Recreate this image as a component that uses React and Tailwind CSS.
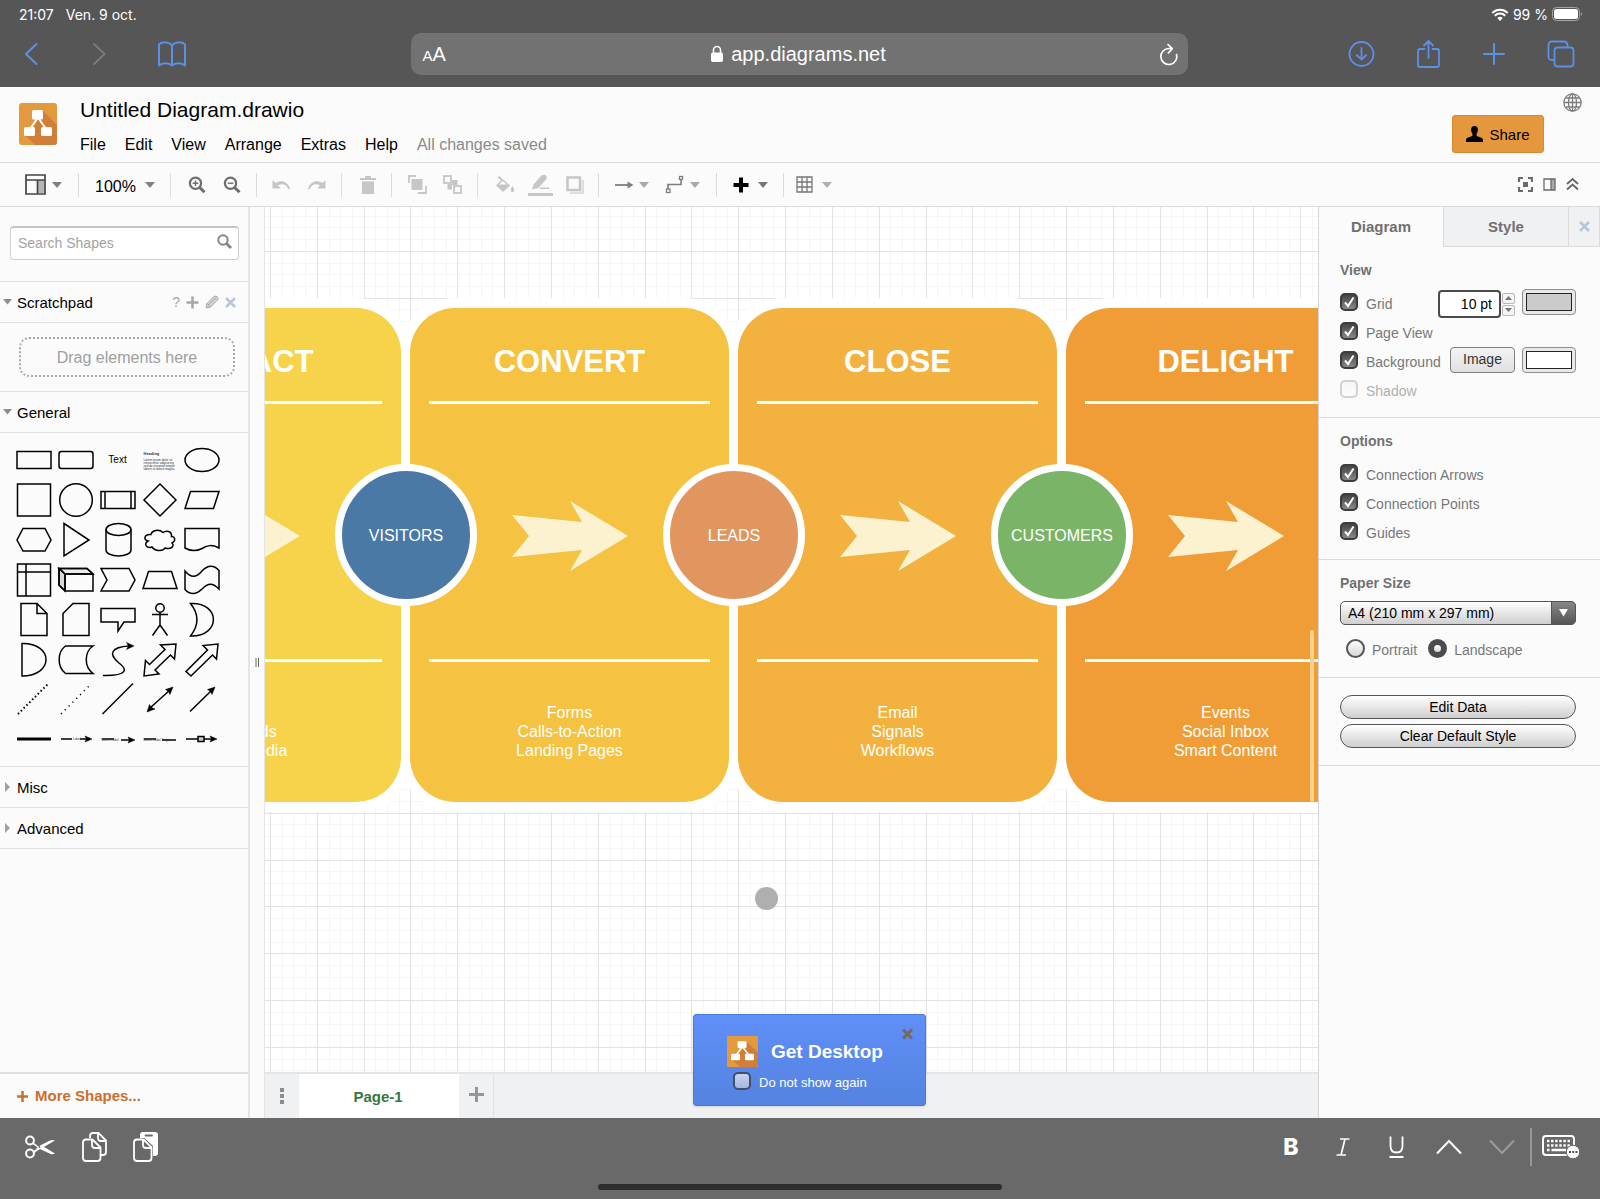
import React from "react";

function Svg({ w, h, children, className = "", ...rest }) {
  return (
    <svg
      width={w}
      height={h}
      viewBox={`0 0 ${w} ${h}`}
      fill="none"
      stroke="currentColor"
      className={`shrink-0 ${className}`}
      aria-hidden="true"
      {...rest}
    >
      {children}
    </svg>
  );
}

function Logo({ w, h, r }) {
  return (
    <svg width={w} height={h} viewBox="0 0 38 42" preserveAspectRatio="none" className="shrink-0" aria-hidden="true">
      <rect width="38" height="42" rx={r} fill="#e39a3f" />
      <path d="M24 8 L38 22 V39 Q38 42 35 42 H16 L6 32 L15 24 L19 17 Z" fill="#d17f38" />
      <path d="M18 16 L11 26 M20 16 L27 26" stroke="#fff" strokeWidth="2" />
      <rect x="13" y="7" width="11" height="9.500" rx="1.500" fill="#fff" />
      <rect x="5" y="24" width="11" height="9" rx="1.500" fill="#fff" />
      <rect x="22" y="24" width="11" height="9" rx="1.500" fill="#fff" />
    </svg>
  );
}

function Browser() {
  return (
    <header className="bg-[#565656] text-white h-[87px] flex flex-col shrink-0 font-['Inter',sans-serif]">
      <div className="h-7 flex items-center justify-between pl-[19px] pr-[17px] text-[14px]">
        <div className="flex gap-3">
          <span>21:07</span>
          <span>Ven. 9 oct.</span>
        </div>
        <div className="flex items-center gap-1">
          <Svg w={18} h={13} stroke="none" fill="#fff">
            <path d="M9 13 L6.2 10.1 A4 4 0 0 1 11.8 10.1 Z" />
            <g fill="none" stroke="#fff" strokeWidth="2">
              <path d="M3.8 7.7 A7.4 7.4 0 0 1 14.2 7.7" />
              <path d="M1.3 5 A11 11 0 0 1 16.7 5" />
            </g>
          </Svg>
          <span>99 %</span>
          <Svg w={31} h={14} stroke="none">
            <rect x="0.5" y="0.5" width="27" height="13" rx="4" stroke="#a5a5a5" />
            <rect x="2" y="2" width="24" height="10" rx="2.5" fill="#fff" />
            <path d="M29 5 Q31 7 29 9 Z" fill="#a5a5a5" />
          </Svg>
        </div>
      </div>
      <div className="flex items-center h-[52px] text-[#5c8fe6]">
        <div className="flex-1 flex items-center pl-[23px]">
          <button aria-label="Back"><Svg w={16} h={24} strokeWidth="2"><path d="M13.5 2 L3 12 L13.5 22" strokeLinecap="round" strokeLinejoin="round" /></Svg></button>
          <button aria-label="Forward" className="ml-[52px] text-[#7a7a7a]"><Svg w={16} h={24} strokeWidth="2"><path d="M3 2 L13.5 12 L3 22" strokeLinecap="round" strokeLinejoin="round" /></Svg></button>
          <button aria-label="Bookmarks" className="ml-[50px]">
            <Svg w={30} h={26} strokeWidth="2">
              <path d="M15 4.5 C12 0.5 4.5 0.5 2 3.5 V24.5 C5 21.5 12 21.5 15 24.5 C18 21.5 25 21.5 28 24.5 V3.5 C25.500 0.5 18 0.5 15 4.500 V24.500" strokeLinejoin="round" />
            </Svg>
          </button>
        </div>
        <div className="w-[777px] h-[42px] rounded-[10px] bg-[#727272] text-white flex items-center pl-3 pr-[9px] font-['Liberation_Sans',Arial,sans-serif]">
          <button aria-label="Text size" className="flex items-baseline w-10">
            <span className="text-[15px]">A</span>
            <span className="text-[20px]">A</span>
          </button>
          <div className="flex-1 flex items-center justify-center gap-[8px] text-[20px] pr-4">
            <Svg w={12} h={18} stroke="none">
              <path d="M2.500 8 V5 a3.500 3.500 0 0 1 7 0 V8" stroke="#fff" strokeWidth="1.600" />
              <rect y="7.500" width="12" height="9.500" rx="1.800" fill="#fff" />
            </Svg>
            <span>app.diagrams.net</span>
          </div>
          <button aria-label="Reload" className="w-7 flex justify-end pt-px">
            <Svg w={20} h={24} strokeWidth="1.700">
              <path d="M17.600 11.500 A8 8 0 1 1 10 5.500 L13 5.700 M9 1.500 L13.300 5.700 L9.300 10" strokeLinecap="round" strokeLinejoin="round" />
            </Svg>
          </button>
        </div>
        <div className="flex-1 flex items-center justify-end gap-[41px] pr-[25px]">
          <button aria-label="Downloads">
            <Svg w={27} h={28} strokeWidth="1.800"><circle cx="13.500" cy="14" r="12" /><path d="M13.500 8 V19.500 M8.700 15 L13.500 19.700 L18.300 15" strokeLinecap="round" strokeLinejoin="round" /></Svg>
          </button>
          <button aria-label="Share page">
            <Svg w={25} h={30} strokeWidth="1.800"><path d="M8.500 10 H4 Q2 10 2 12 V26 Q2 28 4 28 H21 Q23 28 23 26 V12 Q23 10 21 10 H16.500 M12.500 19 V2 M8 6.500 L12.500 2 L17 6.500" strokeLinecap="round" strokeLinejoin="round" /></Svg>
          </button>
          <button aria-label="New tab" className="px-px">
            <Svg w={22} h={22} strokeWidth="2"><path d="M11 1 V21 M1 11 H21" strokeLinecap="round" /></Svg>
          </button>
          <button aria-label="Tabs">
            <Svg w={28} h={28} strokeWidth="1.800"><path d="M7 20 H5 Q1.500 20 1.500 16.500 V5 Q1.500 1.500 5 1.500 H17 Q20 1.500 20.500 5 V7" /><rect x="7.500" y="7.500" width="19" height="19" rx="3" /></Svg>
          </button>
        </div>
      </div>
    </header>
  );
}

function AppHeader() {
  return (
    <div className="h-[76px] shrink-0 flex bg-[#fbfbfb] border-b border-[#d8dade] pl-[19px]">
      <div className="pt-4"><Logo w={38} h={42} r={3} /></div>
      <div className="pl-[23px] pt-[9px] flex-1">
        <h1 className="text-[21px] leading-7">Untitled Diagram.drawio</h1>
        <nav className="flex gap-[19px] mt-[11px] text-base leading-5">
          {["File", "Edit", "View", "Arrange", "Extras", "Help"].map((m) => (
            <button key={m}>{m}</button>
          ))}
          <span className="text-[#8a8a8a]">All changes saved</span>
        </nav>
      </div>
      <button className="mt-7 h-[38px] w-[92px] rounded-[3px] bg-[#e5973e] border border-[#d98a30] flex items-center justify-center gap-[6px] text-[15px]">
        <Svg w={17} h={18} stroke="none" fill="#000">
          <path fill="#000" d="M8.500 1 C11.200 1 12 3 11.900 5 C11.800 7 11 8.200 10.500 9 V10.500 C11.500 12 16.500 12 17 14.500 V17 H0 V14.500 C0.500 12 5.500 12 6.500 10.500 V9 C6 8.200 5.200 7 5.100 5 C5 3 5.800 1 8.500 1 Z" />
        </Svg>
        <span className="pt-[3px]">Share</span>
      </button>
      <button aria-label="Language" className="self-start mt-[6px] ml-[19px] mr-[18px] text-[#7d7d7d]">
        <Svg w={19} h={19} strokeWidth="1.300">
          <circle cx="9.500" cy="9.500" r="8.700" /><ellipse cx="9.500" cy="9.500" rx="4" ry="8.700" />
          <path d="M9.500 1 V18 M1 9.500 H18 M2.500 5 H16.500 M2.500 14 H16.500" />
        </Svg>
      </button>
    </div>
  );
}

function Caret({ className = "text-[#808080]" }) {
  return <Svg w={10} h={6} stroke="none" className={className}><path d="M0 0 H10 L5 6 Z" fill="currentColor" /></Svg>;
}

function Magnifier({ sign }) {
  return (
    <Svg w={18} h={18} className="text-[#6e6e6e]">
      <circle cx="7.500" cy="7.200" r="5.600" strokeWidth="2.200" />
      <path d="M11.700 11.500 L16.500 16.300" strokeWidth="3" />
      <path d={sign === "+" ? "M4.700 7.200 H10.300 M7.500 4.400 V10" : "M4.700 7.200 H10.300"} strokeWidth="1.400" />
    </Svg>
  );
}

const groupClass = "h-6 flex items-center justify-center border-r border-[#dcdcdc]";

function Toolbar() {
  return (
    <div className="h-11 shrink-0 bg-[#fbfbfb] border-b border-[#d8dade] flex items-center text-[#c6c6c6]">
      <div className={`${groupClass} w-[79px] pl-2`}>
        <button aria-label="View" className="flex items-center gap-[6px]">
          <Svg w={21} h={21} className="text-[#444]">
            <rect x="13" y="6" width="6" height="13" fill="#b5b5b5" stroke="none" />
            <path d="M1 1 H20 V20 H1 Z M1 6 H20 M12.500 6 V20" strokeWidth="1.700" />
          </Svg>
          <Caret />
        </button>
      </div>
      <div className={`${groupClass} w-[92px] pl-px`}>
        <button className="flex items-center gap-[9px] text-base text-black"><span className="pt-1">100%</span><Caret /></button>
      </div>
      <div className={`${groupClass} w-[86px] pl-[2px] gap-[17px]`}>
        <button aria-label="Zoom in"><Magnifier sign="+" /></button>
        <button aria-label="Zoom out"><Magnifier sign="-" /></button>
      </div>
      <div className={`${groupClass} w-[85px] gap-4`}>
        <button aria-label="Undo"><Svg w={19} h={12} stroke="none"><path d="M0.500 1 V9.500 H9 L6 6.500 C10 4 14.500 5.500 16.500 10.500 L18 10 C16 2.500 9 0.500 3.500 4 Z" fill="currentColor" /></Svg></button>
        <button aria-label="Redo"><Svg w={19} h={12} stroke="none"><path d="M18.500 1 V9.500 H10 L13 6.500 C9 4 4.500 5.500 2.500 10.500 L1 10 C3 2.500 10 0.500 15.500 4 Z" fill="currentColor" /></Svg></button>
      </div>
      <div className={`${groupClass} w-[50px] pl-[2px]`}>
        <button aria-label="Delete"><Svg w={16} h={18} stroke="none"><path d="M0 2 H5 V0 H11 V2 H16 V4 H0 Z M2 5.500 H14 V18 H2 Z" fill="currentColor" /></Svg></button>
      </div>
      <div className={`${groupClass} w-[86px] pl-px gap-4`}>
        <button aria-label="To front"><Svg w={19} h={19} strokeWidth="1.800"><rect x="3.500" y="4" width="11" height="11" fill="currentColor" stroke="none" /><path d="M1 8 V1 H8 M18 11 V18 H10" /></Svg></button>
        <button aria-label="To back"><Svg w={19} h={19} strokeWidth="1.800"><path d="M9 5 H14.500 V10 H9 V14.500 H4.500 V9 H9 Z" fill="currentColor" stroke="none" /><rect x="1" y="1" width="7" height="7" /><rect x="11" y="11" width="7" height="7" /></Svg></button>
      </div>
      <div className={`${groupClass} w-[121px] pl-[2px] gap-[13px]`}>
        <button aria-label="Fill color"><Svg w={20} h={18} stroke="none"><path d="M4 0 L15 9.500 L8 16 L1 9.500 L6 4.200 L2.500 1.500 Z M7.500 5 L4 8.500 H12 Z M17.500 10 Q20 13.500 18.800 15.500 Q17.500 17 16.200 15.500 Q15 13.500 17.500 10 Z" fill="currentColor" fillRule="evenodd" /></Svg></button>
        <button aria-label="Line color"><Svg w={25} h={22} stroke="none"><path d="M0 19 H25 V22 H0 Z M11 15 L13 13.500 H21 V15 Z" fill="currentColor" /><path d="M5.500 10.500 L13.500 1.500 Q16 0 18 1.500 Q19.500 3.500 18 5.500 L10.500 14 L4 15.500 Z" fill="currentColor" /></Svg></button>
        <button aria-label="Shadow"><Svg w={18} h={18}><path d="M4 17 H17 V4" strokeWidth="2.500" opacity="0.550" /><rect x="1.500" y="1.500" width="12.500" height="12.500" strokeWidth="2.500" /></Svg></button>
      </div>
      <div className={`${groupClass} w-[118px] gap-4 text-[#7d7d7d]`}>
        <button aria-label="Connection" className="flex items-center gap-[5px]"><Svg w={19} h={8}><path d="M0 4 H14" strokeWidth="1.800" /><path d="M12.500 0.500 L18.500 4 L12.500 7.500 Z" fill="currentColor" stroke="none" /></Svg><Caret className="text-[#a9a9a9]" /></button>
        <button aria-label="Waypoints" className="flex items-center gap-[6px]"><Svg w={19} h={19} strokeWidth="1.300"><path d="M3 14 V9.500 H16 V5" strokeWidth="1.600" /><rect x="1.500" y="14" width="3.500" height="3.500" /><rect x="14.500" y="1.500" width="3" height="3" /></Svg><Caret className="text-[#a9a9a9]" /></button>
      </div>
      <div className={`${groupClass} w-[67px]`}>
        <button aria-label="Insert" className="flex items-center gap-[9px]"><Svg w={16} h={16} className="text-black"><path d="M8 0.500 V15.500 M0.500 8 H15.500" strokeWidth="4" /></Svg><Caret className="text-[#777]" /></button>
      </div>
      <button aria-label="Table" className="flex items-center gap-[9px] ml-3 text-[#777]">
        <Svg w={17} h={17} strokeWidth="1.300"><path d="M1 1 H16 V16 H1 Z M6 1 V16 M11 1 V16 M1 6 H16 M1 11 H16" /></Svg>
        <Caret className="text-[#b0b0b0]" />
      </button>
      <div className="ml-auto flex items-center gap-[10px] pr-[21px] pb-px text-[#6a6a6a]">
        <button aria-label="Fullscreen"><Svg w={15} h={15} strokeWidth="2.200"><path d="M1 5 V1 H5 M10 1 H14 V5 M14 10 V14 H10 M5 14 H1 V10" /><rect x="5" y="5" width="5" height="5" fill="currentColor" stroke="none" /></Svg></button>
        <button aria-label="Format panel"><Svg w={13} h={13}><rect x="8" y="1" width="4" height="11" fill="#aaa" stroke="none" /><path d="M1 1 H12 V12 H1 Z M8 1 V12" strokeWidth="1.300" /></Svg></button>
        <button aria-label="Collapse"><Svg w={13} h={14} strokeWidth="2"><path d="M1 7 L6.500 2 L12 7 M1 12.500 L6.500 7.500 L12 12.500" /></Svg></button>
      </div>
    </div>
  );
}

const arrowEnd = (x, y) => <path d={`M${x} ${y} L${x - 7} ${y - 3} L${x - 5.5} ${y} L${x - 7} ${y + 3} Z`} fill="#000" strokeWidth="0.500" />;

const shapes = [
  ["Rectangle", <rect x="4" y="11.500" width="34" height="17" />],
  ["Rounded rectangle", <rect x="4" y="11.500" width="34" height="17" rx="2.500" />],
  ["Text", <text x="20.500" y="23" fontSize="10" textAnchor="middle" fill="#000" stroke="none">Text</text>],
  ["Textbox", (
    <g fill="#333" stroke="none" fontSize="3">
      <text x="4.500" y="15" fontSize="4" fontWeight="bold">Heading</text>
      <text x="4.500" y="20.500">Lorem ipsum dolor sit</text>
      <text x="4.500" y="23.500">consectetur adipisicing</text>
      <text x="4.500" y="26.500">sed do eiusmod tempor</text>
      <text x="4.500" y="29.500">labore et dolore magna</text>
    </g>
  )],
  ["Ellipse", <ellipse cx="21" cy="20" rx="17" ry="11.500" />],
  ["Square", <rect x="4.500" y="4" width="33" height="32" />],
  ["Circle", <circle cx="21" cy="20" r="16.300" />],
  ["Process", <path d="M4 11.500 H38 V28.500 H4 Z M8 11.500 V28.500 M34 11.500 V28.500" />],
  ["Diamond", <path d="M21 4 L37 20 L21 36 L5 20 Z" />],
  ["Parallelogram", <path d="M9.500 11.500 H38 L32.500 28.500 H4 Z" />],
  ["Hexagon", <path d="M10 8.500 H32 L38 20 L32 31 H10 L4 20 Z" />],
  ["Triangle", <path d="M9 3.500 L34 20 L9 36 Z" />],
  ["Cylinder", <><ellipse cx="21.500" cy="9.500" rx="12.500" ry="6" /><path d="M9 9.500 V30 A12.500 6 0 0 0 34 30 V9.500" /></>],
  ["Cloud", <path d="M12 14.500 C5 14 4 20 9 21 C4 24 8 29 13 27 C16 31.500 24 31.500 26 28 C32 30 36 26 33 23 C38 20 35 16 32.500 16.500 C33 11 27 10 24 12.500 C20 9 13 10 12 14.500 Z" />],
  ["Document", <path d="M4 8.500 H38 V28 C31 24.500 27 25 21 28.500 C14 32 9 31 4 28 Z" />],
  ["Internal storage", <path d="M4.500 4 H37.500 V36 H4.500 Z M13 4 V36 M4.500 12 H37.500" />],
  ["Cube", <><path d="M4 8.500 H32 L38 14 H10 Z" fill="#ececec" /><path d="M4 8.500 L10 14 V31 L4 25 Z" fill="#d9d9d9" /><path d="M4 8.500 H32 L38 14 V31 H10 L4 25 Z M4 8.500 L10 14 H38 M10 14 V31" /></>],
  ["Step", <path d="M4 8.500 H32 L38 20 L32 31 H4 L10 20 Z" />],
  ["Trapezoid", <path d="M9.500 11.500 H32.500 L38 28.500 H4 Z" />],
  ["Tape", <path d="M4 11 C10 18 15 18 21 11 C27 4.500 33 5 38 10.500 V29 C32 22.500 27 22.500 21 29 C15 35 9 35 4 29.500 Z" />],
  ["Note", <path d="M8 3.500 H24 L34 13.500 V35.500 H8 Z M24 3.500 V13.500 H34" />],
  ["Card", <path d="M18 3.500 H34 V35.500 H8 V13.500 Z" />],
  ["Callout", <path d="M4 8.500 H38 V22 H27 L21 31 V22 H4 Z" />],
  ["Actor", <><circle cx="21" cy="8" r="4.200" /><path d="M21 12.200 V25 M13 14.500 H29 M21 25 L13.500 35.500 M21 25 L28.500 35.500" /></>],
  ["Or", <path d="M9.500 3.500 C40 2 40 37 9.500 36 C18 25 18 14 9.500 3.500 Z" />],
  ["And", <path d="M9 3.500 C41 3 41 36 9 36 Z" />],
  ["Data storage", <path d="M10.500 6 H38 C29 12 29 27 38 33.500 H10.500 C2 27 2 12 10.500 6 Z" />],
  ["Curve", <><path d="M6 35.500 C32 36 30 29 22 23 C11 14 14 7 32 6" /><path d="M37 6 L29.500 2.500 L31.500 6 L29.500 9.500 Z" fill="#000" strokeWidth="0.500" /></>],
  ["Bidirectional arrow", <path d="M37 4 L35.500 19 L31.500 15 L16 30 L20 34 L5 36 L6.500 20.500 L10.500 24.500 L26 9.500 L21.500 5 Z" />],
  ["Arrow", <path d="M37 4 L35.500 19 L31.500 15 L10 36 L5 31.500 L26.500 10 L22 5.500 Z" />],
  ["Dashed line", <path d="M5 34 L36 3" strokeWidth="2" strokeDasharray="1.500 2.500" />],
  ["Dotted line", <path d="M6 34 L35 5" strokeWidth="1.500" strokeDasharray="1.200 4.200" />],
  ["Line", <path d="M5.500 34 L36 3.500" />],
  ["Bidirectional connector", <><path d="M11 28 L31 10" /><path d="M34 7 L26.500 9.500 L29.500 11.500 L31 14.500 Z M8 32 L10.500 24.500 L12.500 27.500 L16 29 Z" fill="#000" strokeWidth="0.500" /></>],
  ["Directional connector", <><path d="M9 31.500 L31 10" /><path d="M34 7 L26.500 9.500 L29.500 11.500 L31 14.500 Z" fill="#000" strokeWidth="0.500" /></>],
  ["Link", <path d="M4 19 H38" strokeWidth="2.800" />],
  ["Connector with label", <><path d="M6 19 H17 M25 19 H32" /><text x="18" y="20" fontSize="3" fill="#333" stroke="none">Label</text>{arrowEnd(37, 19)}</>],
  ["Connector with 2 labels", <><path d="M5 19 H17 M24 20 H33" /><text x="4" y="21" fontSize="3" fill="#333" stroke="none">Source Label</text>{arrowEnd(38, 20)}</>],
  ["Connector with 3 labels", <><path d="M5 19 H17 M23 20 H37" /><text x="4" y="21" fontSize="3" fill="#333" stroke="none">Source Label Target</text></>],
  ["Connector with symbol", <><path d="M5 19 H32" /><rect x="17" y="16.500" width="6" height="5" fill="#ccc" />{arrowEnd(36, 19)}</>],
];

function SectionHead({ open, children, extra }) {
  return (
    <div className="h-[41px] border-t border-[#e0e0e0] flex items-center pr-3">
      <button className="flex items-center text-[15px]">
        <span className="w-[17px] pl-[3px] flex">
          {open
            ? <Svg w={9} h={6} stroke="none"><path d="M0 0 H9 L4.500 5.500 Z" fill="#8d8d8d" /></Svg>
            : <Svg w={9} h={10} stroke="none"><path d="M2 0 L7 5 L2 10 Z" fill="#a0a0a0" /></Svg>}
        </span>
        <span className="pt-[2px]">{children}</span>
      </button>
      {extra}
    </div>
  );
}

function Sidebar() {
  return (
    <aside className="w-[250px] shrink-0 border-r-2 border-[#e4e4e4] flex flex-col">
      <div className="pt-[19px] px-[10px] pb-[21px]">
        <div className="flex items-center h-[34px] w-[229px] bg-white border border-[#cfcfcf] border-t-2 border-t-[#c4c4c4] rounded-[4px] pl-[7px] pr-[6px]">
          <input aria-label="Search Shapes" placeholder="Search Shapes" className="flex-1 min-w-0 text-[14px] outline-none placeholder:text-[#a3a3a3] bg-transparent" />
          <button aria-label="Search" className="pb-1">
            <Svg w={15} h={15} className="text-[#858585]"><circle cx="6" cy="6" r="4.700" strokeWidth="2" /><path d="M9.500 9.500 L14 14" strokeWidth="2.800" /></Svg>
          </button>
        </div>
      </div>
      <SectionHead
        open
        extra={
          <div className="ml-auto flex items-center gap-[6px] text-[#a6a6a6]">
            <button className="text-[14px]" aria-label="Help">?</button>
            <button aria-label="Add"><Svg w={13} h={13} strokeWidth="2.500"><path d="M6.500 0.500 V12.500 M0.500 6.500 H12.500" /></Svg></button>
            <button aria-label="Edit"><Svg w={14} h={14} strokeWidth="1"><path d="M1 13 L2 8.500 L9 1.500 Q11 0.500 12.500 2 Q13.500 3.500 12.500 5 L5.500 12 Z" fill="#d5d5d5" /><path d="M3.500 10 L10.500 3 M2 8.500 L5.500 12" /></Svg></button>
            <button aria-label="Close" className="text-[#b9c6d8]"><Svg w={11} h={11} strokeWidth="2.500"><path d="M1 1 L10 10 M10 1 L1 10" /></Svg></button>
          </div>
        }
      >
        Scratchpad
      </SectionHead>
      <div className="h-[69px] border-t border-[#e0e0e0] pt-[14px] pl-[19px]">
        <div className="h-10 w-[216px] rounded-[10px] border-2 border-dotted border-[#a8a8a8] text-[#a0a0a0] text-base pt-[2px] flex items-center justify-center">Drag elements here</div>
      </div>
      <SectionHead open>General</SectionHead>
      <div className="h-[334px] border-t border-[#e0e0e0] pt-[7px] pl-[13px]">
        <div className="grid grid-cols-[repeat(5,42px)]">
          {shapes.map(([name, drawing]) => (
            <button key={name} aria-label={name} className="h-10">
              <Svg w={42} h={40} stroke="#000" strokeWidth="1.500">{drawing}</Svg>
            </button>
          ))}
        </div>
      </div>
      <SectionHead>Misc</SectionHead>
      <SectionHead>Advanced</SectionHead>
      <div className="flex-1 border-t border-[#e0e0e0]" />
      <button className="h-[46px] border-t-2 border-[#e0e0e0] pl-[17px] flex items-center gap-[7px] text-[15px] font-bold text-[#c9702f]">
        <Svg w={11} h={11} strokeWidth="2.500"><path d="M5.500 0 V11 M0 5.500 H11" /></Svg>
        <span className="pt-px">More Shapes...</span>
      </button>
    </aside>
  );
}

const PITCH = 46.83;
const gridSteps = Array.from({ length: 200 }, (_, i) => i - 1);
const gridX = (i) => Math.round(5 + (i * PITCH) / 4);
const gridY = (i) => Math.round(-3 + (i * PITCH) / 4);

function GridLines() {
  const draw = (steps, color) =>
    steps.map((i) => (
      <g key={`${color}${i}`} fill={color}>
        <rect x={gridX(i)} y="0" width="1" height="100%" />
        <rect x="0" y={gridY(i)} width="100%" height="1" />
      </g>
    ));
  return (
    <svg className="absolute inset-0 w-full h-full" shapeRendering="crispEdges" aria-hidden="true">
      {draw(gridSteps.filter((i) => i % 4 !== 0), "#f6f6f6")}
      {draw(gridSteps.filter((i) => i % 4 === 0), "#e3e3e3")}
    </svg>
  );
}

const cards = [
  { x: -183, color: "#f6d34a", title: "ATTRACT", lines: ["Blog", "Keywords", "Social Media"] },
  { x: 145, color: "#f5c242", title: "CONVERT", lines: ["Forms", "Calls-to-Action", "Landing Pages"] },
  { x: 473, color: "#f3b23f", title: "CLOSE", lines: ["Email", "Signals", "Workflows"] },
  { x: 801, color: "#f09d38", title: "DELIGHT", lines: ["Events", "Social Inbox", "Smart Content"] },
];

const stages = [
  { x: 70, color: "#4b79a6", label: "VISITORS" },
  { x: 398, color: "#e1965f", label: "LEADS" },
  { x: 726, color: "#7ab467", label: "CUSTOMERS" },
];

function Canvas() {
  return (
    <div className="relative flex-1 overflow-hidden bg-white">
      <GridLines />
      {cards.map((c) => (
        <div key={c.title} style={{ left: c.x }} className="absolute top-[101px] w-[319px] h-[494px] rounded-[45px] shadow-[0_0_0_10px_#fff]" />
      ))}
      {cards.map((c) => (
        <div
          key={c.title}
          style={{ left: c.x, backgroundColor: c.color }}
          className="absolute top-[101px] w-[319px] h-[494px] rounded-[45px] px-[19px] text-white text-center"
        >
          <h2 className="h-24 border-b-3 border-white text-[31px] leading-9 font-bold pt-9">{c.title}</h2>
          <Svg w={116} h={70} stroke="none" className="mt-[97px] ml-[83px]">
            <path d="M0 14 L70 21 L58 0 L116 35 L58 70 L70 49 L0 56 L17 35 Z" fill="#fdf2d0" />
          </Svg>
          <div className="mt-[88px] border-t-3 border-white pt-[41px] text-base leading-[19px]">
            {c.lines.map((l) => <p key={l}>{l}</p>)}
          </div>
        </div>
      ))}
      {stages.map((s) => (
        <div
          key={s.label}
          style={{ left: s.x, backgroundColor: s.color }}
          className="absolute top-[257px] w-[142px] h-[142px] rounded-full border-[7px] border-white text-white text-base flex items-center justify-center"
        >
          <span className="pt-[2px]">{s.label}</span>
        </div>
      ))}
      <div className="absolute right-1 top-[423px] w-1 h-[172px] rounded-full bg-[#fbd08f]" />
      <div className="absolute left-[490px] top-[680px] w-[23px] h-[23px] rounded-full bg-[#afafaf]" />
    </div>
  );
}

function PageTabs() {
  return (
    <div className="h-[46px] shrink-0 bg-[#f0f1f3] border-t-2 border-[#e4e5e8] flex">
      <button aria-label="Pages" className="w-[34px] flex items-center justify-center text-[#8d8d8d]">
        <Svg w={4} h={16} stroke="none"><rect width="4" height="4" fill="currentColor" /><rect y="6" width="4" height="4" fill="currentColor" /><rect y="12" width="4" height="4" fill="currentColor" /></Svg>
      </button>
      <button className="w-[160px] bg-white text-[15px] font-bold text-[#35783b] pt-[3px] pr-[2px]">Page-1</button>
      <button aria-label="Insert page" className="w-[35px] border-r border-[#e0e1e4] flex items-center justify-center text-[#969696] pb-1">
        <Svg w={15} h={15} strokeWidth="3"><path d="M7.500 0 V15 M0 7.500 H15" /></Svg>
      </button>
    </div>
  );
}

function DesktopPopup() {
  return (
    <div className="absolute left-[428px] bottom-3 w-[233px] h-[92px] rounded-[3px] border border-[#4a78dc] bg-linear-to-b from-[#5f8ff8] to-[#5583e0] text-white shadow-sm">
      <div className="flex items-center gap-[13px] pl-[33px] pt-5">
        <Logo w={31} h={31} r={1} />
        <a href="#desktop" className="text-[19px] leading-8 pt-px font-bold">Get Desktop</a>
      </div>
      <label className="flex items-center gap-[8px] pl-[39px] mt-px text-[13px]">
        <input type="checkbox" className="appearance-none w-[18px] h-[18px] rounded-[5px] border-2 border-[#44506a] bg-linear-to-b from-[#c9d4ee] to-[#a5b8e2]" />
        <span className="pt-1">Do not show again</span>
      </label>
      <button aria-label="Close" className="absolute top-[13px] right-3 text-[#75685c]">
        <Svg w={11} h={12} strokeWidth="3"><path d="M1 1.500 L10 10.500 M10 1.500 L1 10.500" /></Svg>
      </button>
    </div>
  );
}

function Check({ label, checked, disabled, children }) {
  return (
    <div className="h-[29px] flex items-center">
      <label className={`flex items-center text-[14px] ${disabled ? "text-[#b0b0b0]" : "text-[#777]"}`}>
        <span className="relative flex">
          <input
            type="checkbox"
            defaultChecked={checked}
            disabled={disabled}
            className="appearance-none w-[18px] h-[18px] rounded-[5px] border-2 border-[#3c3c3c] bg-linear-to-b from-[#444] to-[#888] disabled:border-[#d2d2d2] disabled:from-[#f6f6f6] disabled:to-[#fcfcfc]"
          />
          {checked && (
            <Svg w={18} h={18} className="absolute inset-0 pointer-events-none text-white"><path d="M5 9.500 L8 13 L13.500 4.500" strokeWidth="2" /></Svg>
          )}
        </span>
        <span className="pl-2 pt-[5px]">{label}</span>
      </label>
      {children}
    </div>
  );
}

function Swatch({ label, inner }) {
  return (
    <button aria-label={label} className="w-[54px] h-[26px] ml-[7px] rounded-[4px] border border-[#8c8c8c] bg-[#e9e9e9] p-[3px] flex">
      <span className={`flex-1 border border-[#222] ${inner}`} />
    </button>
  );
}

function Radio({ label, checked }) {
  return (
    <label className="flex items-center gap-[7px] text-[14px] text-[#777]">
      <input
        type="radio"
        name="orientation"
        defaultChecked={checked}
        className="appearance-none w-[19px] h-[19px] rounded-full border-2 border-[#555] bg-linear-to-b from-[#fdfdfd] to-[#d8d8d8] checked:border-[6px] checked:border-[#4c4c4c]"
      />
      <span className="pt-1">{label}</span>
    </label>
  );
}

const sectionClass = "border-b border-[#d9dbde] pl-[21px] pr-6 pt-[13px]";
const headClass = "text-[14px] leading-5 font-bold text-[#707070] mb-[7px]";
const pill = "block w-full h-6 rounded-full border border-[#555] bg-linear-to-b from-white to-[#cfcfcf] text-[14px] leading-5";

function FormatPanel() {
  return (
    <aside className="w-[282px] shrink-0 border-l border-[#d3d5d8]">
      <div className="flex h-10 text-[15px] font-bold text-[#707070]">
        <button className="w-[124px]">Diagram</button>
        <button className="flex-1 bg-[#eff1f3] border-l border-b border-[#d9dbde] pt-px">Style</button>
        <button aria-label="Close panel" className="w-8 bg-[#eff1f3] border-x border-b border-[#d9dbde] flex items-center justify-center text-[#b9c6d8]">
          <Svg w={11} h={11} strokeWidth="2.500"><path d="M1 1 L10 10 M10 1 L1 10" /></Svg>
        </button>
      </div>
      <section className={`${sectionClass} pb-[14px]`}>
        <h3 className={headClass}>View</h3>
        <Check label="Grid" checked>
          <div className="ml-auto flex items-center">
            <input aria-label="Grid size" defaultValue="10 pt" className="w-[63px] h-7 mt-1 rounded-[4px] border-2 border-[#4a4a4a] bg-white text-right pr-[7px] text-[14px] outline-none" />
            <div className="flex flex-col gap-px ml-px mt-[5px]">
              <button aria-label="Increase" className="w-[13px] h-[11px] rounded-[2px] border border-[#b8b8b8] bg-[#f4f4f4] flex items-center justify-center"><Svg w={7} h={4} stroke="none"><path d="M0 4 H7 L3.500 0 Z" fill="#777" /></Svg></button>
              <button aria-label="Decrease" className="w-[13px] h-[11px] rounded-[2px] border border-[#b8b8b8] bg-[#f4f4f4] flex items-center justify-center"><Svg w={7} h={4} stroke="none"><path d="M0 0 H7 L3.500 4 Z" fill="#777" /></Svg></button>
            </div>
            <Swatch label="Grid color" inner="bg-[#cbcbcb]" />
          </div>
        </Check>
        <Check label="Page View" checked />
        <Check label="Background" checked>
          <div className="ml-auto flex items-center">
            <button className="w-[65px] h-[26px] rounded-[4px] border border-[#7d7d7d] bg-linear-to-b from-[#f3f3f3] to-[#e0e0e0] text-[14px] text-[#333]">Image</button>
            <Swatch label="Background color" inner="bg-white" />
          </div>
        </Check>
        <Check label="Shadow" disabled />
      </section>
      <section className={`${sectionClass} pb-[14px]`}>
        <h3 className={headClass}>Options</h3>
        <Check label="Connection Arrows" checked />
        <Check label="Connection Points" checked />
        <Check label="Guides" checked />
      </section>
      <section className={`${sectionClass} pb-[14px]`}>
        <h3 className={headClass}>Paper Size</h3>
        <div className="relative mt-2">
          <select aria-label="Paper Size" className="appearance-none block w-full h-6 rounded-[5px] border border-[#555] bg-linear-to-b from-white to-[#cfcfcf] pl-[7px] text-[14px] text-black">
            <option>A4 (210 mm x 297 mm)</option>
          </select>
          <span className="absolute right-0 top-0 w-[25px] h-6 rounded-r-[5px] border border-[#555] bg-linear-to-b from-[#888] to-[#555] flex items-center justify-center pointer-events-none">
            <Svg w={9} h={8} stroke="none"><path d="M0 0 H9 L4.500 7.500 Z" fill="#fff" /></Svg>
          </span>
        </div>
        <div className="mt-2 h-[30px] flex items-center gap-[11px] pl-[6px]">
          <Radio label="Portrait" />
          <Radio label="Landscape" checked />
        </div>
      </section>
      <section className="border-b border-[#d9dbde] pl-[21px] pr-6 py-[17px] flex flex-col gap-[5px]">
        <button className={pill}>Edit Data</button>
        <button className={pill}>Clear Default Style</button>
      </section>
    </aside>
  );
}

function BottomBar() {
  return (
    <footer className="h-[81px] shrink-0 bg-[#696969] text-white flex flex-col justify-between items-center font-['Inter',sans-serif]">
      <div className="w-full h-14 flex items-center justify-between pl-[25px] pr-5 pt-[2px]">
        <div className="flex items-center gap-[26px]">
          <button aria-label="Cut">
            <Svg w={31} h={24}>
              <circle cx="5" cy="5.500" r="3.900" strokeWidth="2" />
              <circle cx="5" cy="18.500" r="3.900" strokeWidth="2" />
              <path d="M8 16.500 C12 14 12 12.500 15 10.500 L25 5.500 Q28 4.300 30 5.500 L17 13 Q12 15.500 9 18.500 Z M8 7.500 C12 9.500 12 11 15 12 L17.500 11 L30 18.500 Q28 20 25 18.800 L15 14 C12 12.500 11 11 7.500 9 Z" fill="currentColor" stroke="none" />
              <circle cx="14.500" cy="12" r="0.900" fill="#696969" stroke="none" />
            </Svg>
          </button>
          <button aria-label="Copy">
            <Svg w={25} h={30} strokeWidth="1.800" strokeLinejoin="round">
              <path d="M8 6 V4 Q8 1 11 1 H16.500 L24 8.500 V20 Q24 23 21 23 H19 M16 1 V6 Q16 9 19 9 H24" />
              <path d="M4 7.500 H10.500 L18.500 15.500 V26 Q18.500 29 15.500 29 H4 Q1 29 1 26 V10.500 Q1 7.500 4 7.500 Z M10 7.500 V13 Q10 16 13 16 H18.500" />
            </Svg>
          </button>
          <button aria-label="Paste">
            <Svg w={26} h={30} strokeWidth="1.800" strokeLinejoin="round">
              <path d="M7 6 V3 Q7 0 10 0 H22 Q25 0 25 3 V21 Q25 24 22 24 H20 V14 L11.500 6 Z" fill="currentColor" stroke="none" />
              <path d="M12.500 3.500 H19" stroke="#696969" strokeLinecap="round" />
              <path d="M4 7.500 H10.500 L18.500 15.500 V26 Q18.500 29 15.500 29 H4 Q1 29 1 26 V10.500 Q1 7.500 4 7.500 Z M10 7.500 V13 Q10 16 13 16 H18.500" />
            </Svg>
          </button>
        </div>
        <div className="flex items-center">
          <button aria-label="Bold" className="w-[52px] text-[23px] font-extrabold">B</button>
          <button aria-label="Italic" className="w-[52px] flex justify-center"><Svg w={14} h={18} strokeWidth="1.700"><path d="M4 1 H13.500 M0.500 17 H10 M9 1 L5 17" /></Svg></button>
          <button aria-label="Underline" className="w-[54px] flex justify-center"><Svg w={15} h={22} strokeWidth="1.800"><path d="M1.500 0.500 V10 Q1.500 16.500 7.500 16.500 Q13.500 16.500 13.500 10 V0.500 M0.500 21 H14.500" /></Svg></button>
          <button aria-label="Previous" className="w-[52px] flex justify-center"><Svg w={26} h={16} strokeWidth="2"><path d="M1 14.500 L13 2 L25 14.500" /></Svg></button>
          <button aria-label="Next" className="w-[54px] flex justify-center text-[#9b9b9b]"><Svg w={26} h={16} strokeWidth="2"><path d="M1 1.500 L13 14 L25 1.500" /></Svg></button>
          <span className="w-[2px] h-[38px] bg-[#979797] mx-px" />
          <button aria-label="Keyboard" className="ml-[9px]">
            <Svg w={38} h={24}>
              <rect x="1" y="1" width="31" height="19" rx="3" strokeWidth="2" />
              <path d="M5 6 H28 M5 10.500 H28" strokeWidth="2.600" strokeDasharray="2.400 1.700" />
              <path d="M5 15 H7.500 M9.500 15 H24" strokeWidth="2.600" />
              <circle cx="31" cy="17" r="6.700" fill="#fff" stroke="#696969" strokeWidth="1" />
              <path d="M27 17 H35.500" stroke="#555" strokeWidth="2" strokeDasharray="2 1.200" />
            </Svg>
          </button>
        </div>
      </div>
      <span className="w-[404px] h-[6px] mb-[9px] rounded-full bg-[#2d2d2d]" />
    </footer>
  );
}

export default function App() {
  return (
    <div className="min-h-screen flex flex-col bg-[#fbfbfb] text-black font-['Liberation_Sans',Arial,sans-serif]">
      <Browser />
      <AppHeader />
      <Toolbar />
      <main className="flex-1 flex">
        <Sidebar />
        <div className="w-[14px] shrink-0 flex items-center justify-center">
          <Svg w={4} h={9} strokeWidth="1" className="text-[#666]"><path d="M1 0 V9 M3.500 0 V9" /></Svg>
        </div>
        <div className="relative flex-1 min-w-0 flex flex-col border-l border-[#e4e4e4]">
          <Canvas />
          <PageTabs />
          <DesktopPopup />
        </div>
        <FormatPanel />
      </main>
      <BottomBar />
    </div>
  );
}
